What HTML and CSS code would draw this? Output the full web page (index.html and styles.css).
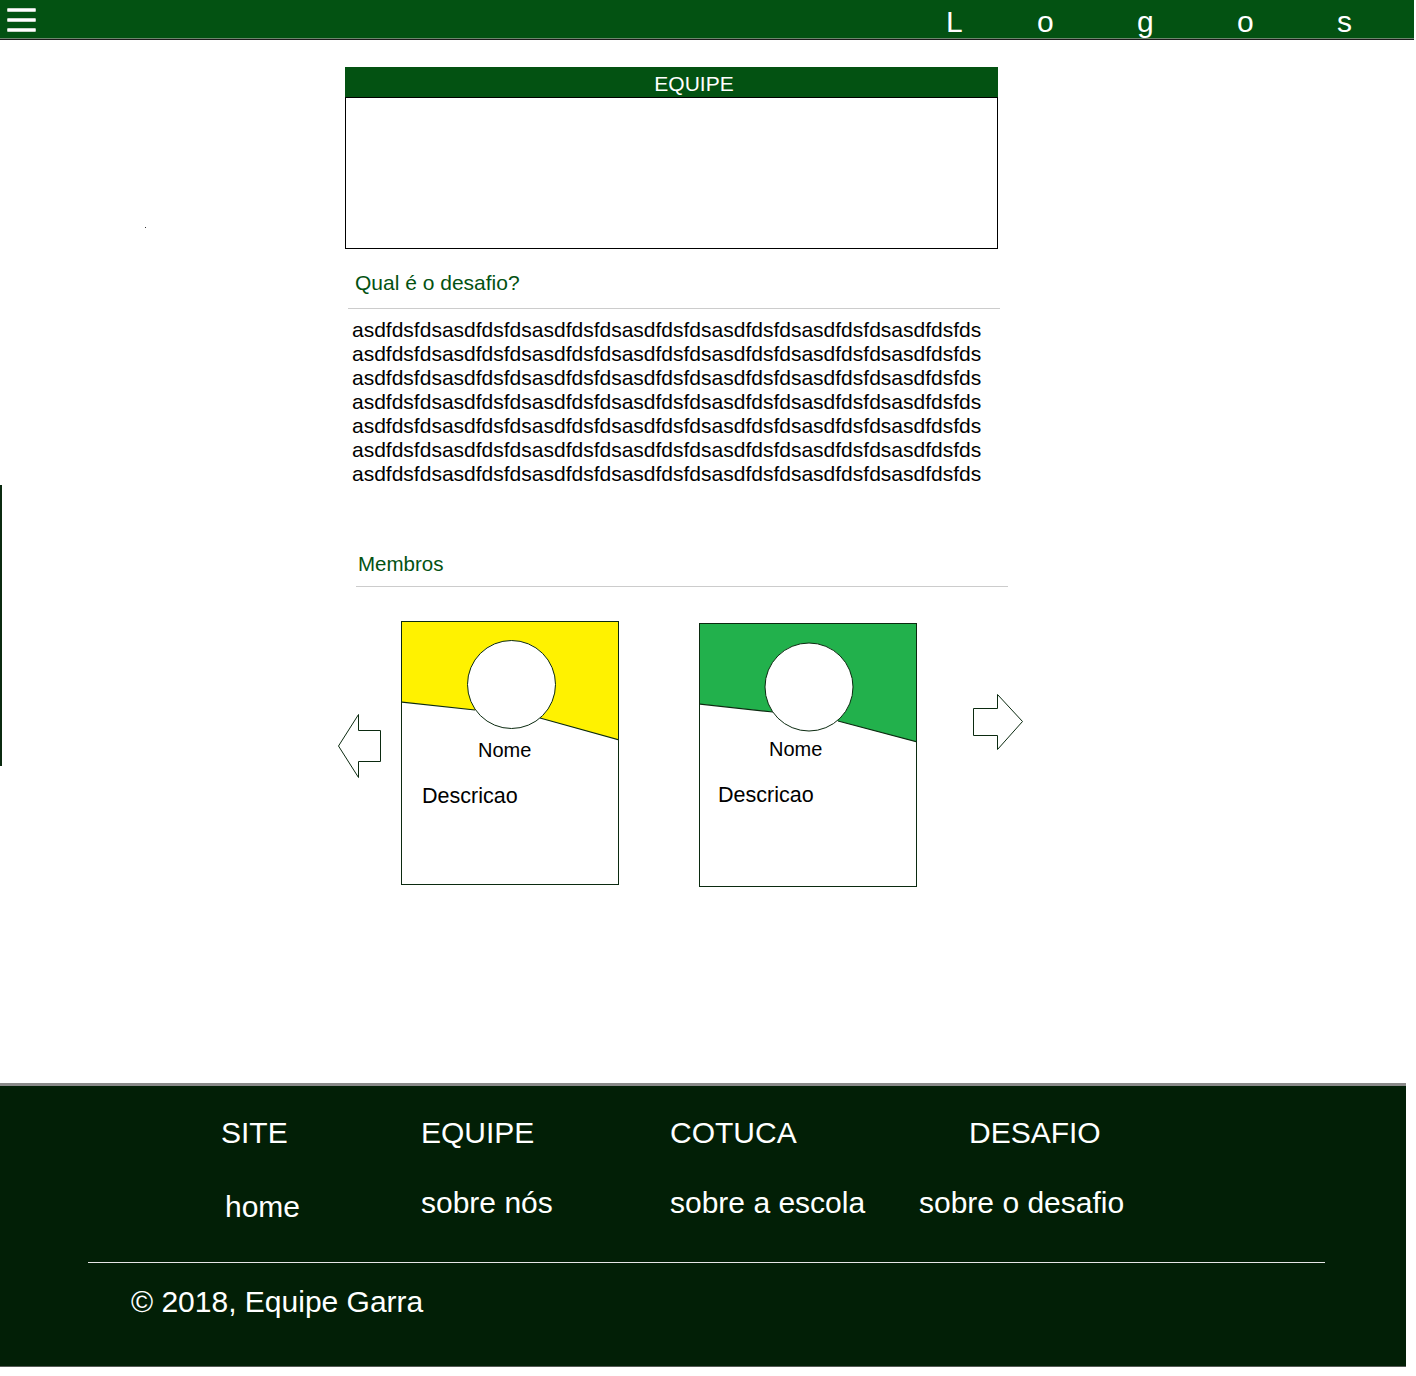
FILE: index.html
```html
<!DOCTYPE html>
<html lang="pt-BR">
<head>
<meta charset="utf-8">
<title>Equipe</title>
<link rel="stylesheet" href="styles.css">
</head>
<body>
<header class="topbar">
  <div class="menu" aria-label="menu"><span></span><span></span><span></span></div>
  <div class="logo"><span>L</span><span>o</span><span>g</span><span>o</span><span>s</span></div>
</header>
<div class="edge-line"></div>
<div class="speck"></div>
<main class="content">
  <section class="team-box">
    <div class="team-head">EQUIPE</div>
    <div class="team-body"></div>
  </section>
  <h2 class="sec-title sec-desafio">Qual é o desafio?</h2>
  <div class="desc">
    <div>asdfdsfdsasdfdsfdsasdfdsfdsasdfdsfdsasdfdsfdsasdfdsfdsasdfdsfds</div>
    <div>asdfdsfdsasdfdsfdsasdfdsfdsasdfdsfdsasdfdsfdsasdfdsfdsasdfdsfds</div>
    <div>asdfdsfdsasdfdsfdsasdfdsfdsasdfdsfdsasdfdsfdsasdfdsfdsasdfdsfds</div>
    <div>asdfdsfdsasdfdsfdsasdfdsfdsasdfdsfdsasdfdsfdsasdfdsfdsasdfdsfds</div>
    <div>asdfdsfdsasdfdsfdsasdfdsfdsasdfdsfdsasdfdsfdsasdfdsfdsasdfdsfds</div>
    <div>asdfdsfdsasdfdsfdsasdfdsfdsasdfdsfdsasdfdsfdsasdfdsfdsasdfdsfds</div>
    <div>asdfdsfdsasdfdsfdsasdfdsfdsasdfdsfdsasdfdsfdsasdfdsfdsasdfdsfds</div>
  </div>
  <h2 class="sec-title sec-membros">Membros</h2>
  <div class="members">
    <svg class="arrow arrow-left" width="44" height="65" viewBox="0 0 44 65">
      <polygon points="0.5,32 20.5,0.5 20.5,16.5 42.5,16.5 42.5,47.5 20.5,47.5 20.5,63.5" fill="#fff" stroke="#0b2a10" stroke-width="1"/>
    </svg>
    <div class="card card-a">
      <svg class="card-art" width="216" height="262" viewBox="1 1 216 262">
        <polygon points="0,0 218,0 218,119 139,97 74,89 0,81" fill="#fff200"/>
        <polyline points="0,81 74,89" fill="none" stroke="#0b2a10" stroke-width="1.2"/>
        <polyline points="139,97 218,119" fill="none" stroke="#0b2a10" stroke-width="1.2"/>
        <circle cx="110.5" cy="63.5" r="44" fill="#fff" stroke="#0b2a10" stroke-width="1"/>
      </svg>
      <div class="card-name">Nome</div>
      <div class="card-desc">Descricao</div>
    </div>
    <div class="card card-b">
      <svg class="card-art" width="216" height="262" viewBox="1 1 216 262">
        <polygon points="0,0 218,0 218,119 139,98 74,89 0,81" fill="#22b14c"/>
        <polyline points="-1,81 74,89" fill="none" stroke="#0b2a10" stroke-width="1.2"/>
        <polyline points="139,98 218,119" fill="none" stroke="#0b2a10" stroke-width="1.2"/>
        <circle cx="110" cy="64" r="44" fill="#fff" stroke="#0b2a10" stroke-width="1"/>
      </svg>
      <div class="card-name">Nome</div>
      <div class="card-desc">Descricao</div>
    </div>
    <svg class="arrow arrow-right" width="51" height="57" viewBox="0 0 51 57">
      <polygon points="0.5,14.5 24.5,14.5 24.5,0.5 49.5,27.5 24.5,55.5 24.5,41.5 0.5,41.5" fill="#fff" stroke="#0b2a10" stroke-width="1"/>
    </svg>
  </div>
</main>
<footer class="footer">
  <div class="foot-nav">
    <div class="foot-col col-site">
      <div class="foot-head">SITE</div>
      <a class="foot-link link-home">home</a>
    </div>
    <div class="foot-col col-equipe">
      <div class="foot-head">EQUIPE</div>
      <a class="foot-link">sobre nós</a>
    </div>
    <div class="foot-col col-cotuca">
      <div class="foot-head">COTUCA</div>
      <a class="foot-link">sobre a escola</a>
    </div>
    <div class="foot-col col-desafio">
      <div class="foot-head head-desafio">DESAFIO</div>
      <a class="foot-link">sobre o desafio</a>
    </div>
  </div>
  <div class="foot-rule"></div>
  <div class="copyright">© 2018, Equipe Garra</div>
</footer>
</body>
</html>
```
FILE: styles.css
```css
* { box-sizing: border-box; }

html, body {
  margin: 0;
  padding: 0;
  background: #ffffff;
}

body {
  font-family: "Liberation Sans", Arial, sans-serif;
  color: #000;
  width: 1416px;
  min-height: 1376px;
  position: relative;
}

/* ---------- top bar ---------- */
.topbar {
  height: 39px;
  background: #035212;
  border-bottom: 1px solid #6f866f;
  box-shadow: 0 1px 0 #1b1b1b;
  display: flex;
  align-items: flex-start;
  width: 1414px;
}

.menu {
  margin-left: 7px;
  padding-top: 8px;
  display: flex;
  flex-direction: column;
  gap: 6px;
}

.menu span {
  display: block;
  width: 29px;
  height: 4px;
  background: #ffffff;
  border: 1px solid #c9d3c9;
  border-radius: 1px;
}

.logo {
  margin-left: 910px;
  padding-top: 4px;
  display: flex;
  font-size: 30px;
  line-height: 35px;
  color: #ffffff;
}

.logo span { display: block; width: 100px; }
.logo span:first-child { width: 91px; }
.logo span:last-child { width: 20px; }

/* decorations */
.edge-line {
  position: absolute;
  left: 0;
  top: 485px;
  width: 2px;
  height: 281px;
  background: #0b2a10;
}

.speck {
  position: absolute;
  left: 145px;
  top: 227px;
  width: 1px;
  height: 1px;
  background: #333;
}

/* ---------- content ---------- */
.content {
  display: flex;
  flex-direction: column;
  align-items: flex-start;
}

.team-box {
  margin-top: 28px;
  margin-left: 345px;
  width: 653px;
}

.team-head {
  height: 30px;
  background: #035212;
  color: #ffffff;
  text-align: center;
  padding-left: 45px;
  font-size: 21px;
  line-height: 34px;
  overflow: hidden;
}

.team-body {
  height: 152px;
  border: 1px solid #000;
}

.sec-title {
  margin: 0;
  font-weight: normal;
  color: #035212;
  line-height: 24px;
  width: 652px;
  border-bottom: 1px solid #cccccc;
}

.sec-desafio {
  margin-top: 22px;
  margin-left: 348px;
  padding-left: 7px;
  padding-bottom: 13px;
  font-size: 21px;
}

.desc {
  margin-top: 9px;
  margin-left: 352px;
  font-size: 21px;
  line-height: 24px;
  white-space: nowrap;
}

.sec-membros {
  margin-top: 66px;
  margin-left: 356px;
  padding-left: 2px;
  padding-bottom: 10px;
  font-size: 20.5px;
}

/* ---------- members row ---------- */
.members {
  display: flex;
  align-items: flex-start;
  margin-left: 338px;
}

.arrow { display: block; flex: none; }

.arrow-left { margin-top: 127px; }

.arrow-right {
  margin-top: 107px;
  margin-left: 56px;
}

.card {
  position: relative;
  flex: none;
  width: 218px;
  height: 264px;
  border: 1px solid #0b2a10;
  color: #000;
}

.card-art {
  position: absolute;
  left: 0;
  top: 0;
}

.card-name,
.card-desc {
  position: relative;
  line-height: 24px;
}

.card-name { font-size: 20px; }
.card-desc { font-size: 21.5px; margin-top: 22px; }

.card-a {
  margin-top: 34px;
  margin-left: 19px;
  padding-top: 116px;
}
.card-a .card-name { margin-left: 76px; }
.card-a .card-desc { margin-left: 20px; }

.card-b {
  margin-top: 36px;
  margin-left: 80px;
  padding-top: 113px;
}
.card-b .card-name { margin-left: 69px; }
.card-b .card-desc { margin-left: 18px; }

/* ---------- footer ---------- */
.footer {
  margin-top: 196px;
  width: 1406px;
  background: #021f06;
  border-top: 3px solid #8a8a8a;
  border-bottom: 1px solid #555a55;
  color: #ffffff;
  padding-top: 29px;
  padding-bottom: 46px;
}

.foot-nav {
  display: flex;
  align-items: flex-start;
  padding-left: 221px;
}

.foot-col {
  display: flex;
  flex-direction: column;
  align-items: flex-start;
}

.col-site { width: 200px; }
.col-equipe { width: 249px; }
.col-cotuca { width: 249px; }

.foot-head {
  font-size: 30px;
  line-height: 36px;
}

.head-desafio { margin-left: 50px; }

.foot-link {
  margin-top: 34px;
  font-size: 30px;
  line-height: 36px;
  color: #ffffff;
}

.link-home {
  margin-top: 38px;
  margin-left: 4px;
}

.foot-rule {
  margin-top: 37px;
  margin-left: 88px;
  width: 1237px;
  height: 1px;
  background: #e6e6e6;
}

.copyright {
  margin-top: 21px;
  margin-left: 131px;
  font-size: 30px;
  line-height: 36px;
}
```
